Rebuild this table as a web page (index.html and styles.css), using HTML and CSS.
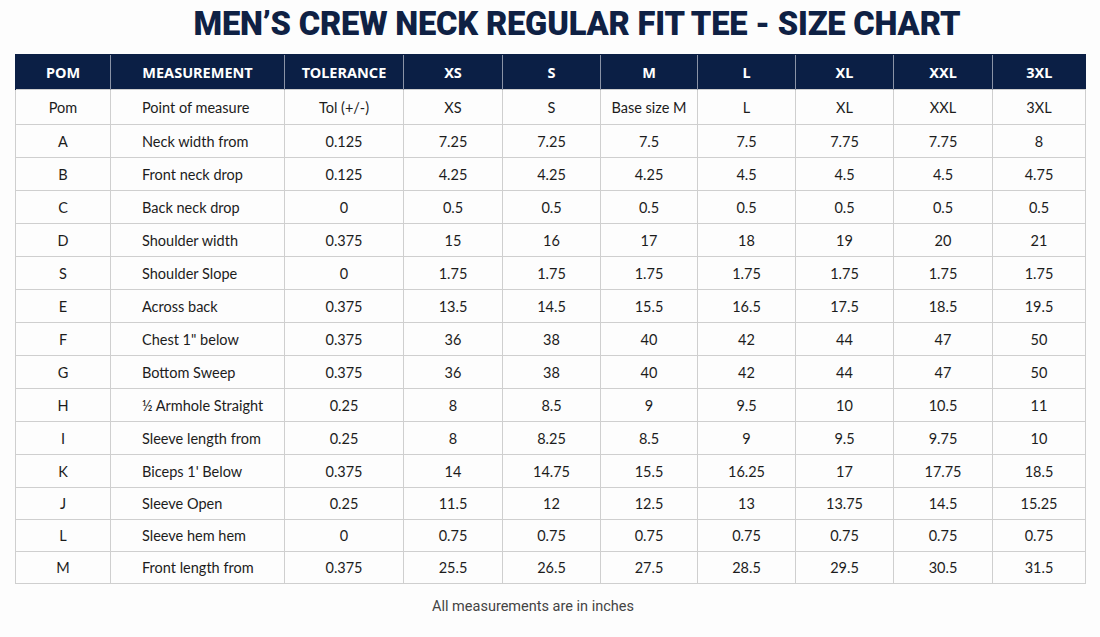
FILE: index.html
```html
<!DOCTYPE html>
<html lang="en">
<head>
<meta charset="utf-8">
<title>Size Chart</title>
<link rel="stylesheet" href="styles.css">
</head>
<body>
<div class="page">
  <h1 class="title">MEN’S CREW NECK REGULAR FIT TEE - SIZE CHART</h1>
  <table class="chart">
    <colgroup>
      <col class="c-pom"><col class="c-meas"><col class="c-tol"><col class="c-xs"><col class="c-s"><col class="c-m"><col class="c-l"><col class="c-xl"><col class="c-xxl"><col class="c-3xl">
    </colgroup>
    <thead>
      <tr><th>POM</th><th>MEASUREMENT</th><th>TOLERANCE</th><th>XS</th><th>S</th><th>M</th><th>L</th><th>XL</th><th>XXL</th><th>3XL</th></tr>
    </thead>
    <tbody>
      <tr class="sub"><td>Pom</td><td class="m">Point of measure</td><td>Tol (+/-)</td><td>XS</td><td>S</td><td>Base size M</td><td>L</td><td>XL</td><td>XXL</td><td>3XL</td></tr>
      <tr><td>A</td><td class="m">Neck width from</td><td>0.125</td><td>7.25</td><td>7.25</td><td>7.5</td><td>7.5</td><td>7.75</td><td>7.75</td><td>8</td></tr>
      <tr><td>B</td><td class="m">Front neck drop</td><td>0.125</td><td>4.25</td><td>4.25</td><td>4.25</td><td>4.5</td><td>4.5</td><td>4.5</td><td>4.75</td></tr>
      <tr><td>C</td><td class="m">Back neck drop</td><td>0</td><td>0.5</td><td>0.5</td><td>0.5</td><td>0.5</td><td>0.5</td><td>0.5</td><td>0.5</td></tr>
      <tr><td>D</td><td class="m">Shoulder width</td><td>0.375</td><td>15</td><td>16</td><td>17</td><td>18</td><td>19</td><td>20</td><td>21</td></tr>
      <tr><td>S</td><td class="m">Shoulder Slope</td><td>0</td><td>1.75</td><td>1.75</td><td>1.75</td><td>1.75</td><td>1.75</td><td>1.75</td><td>1.75</td></tr>
      <tr><td>E</td><td class="m">Across back</td><td>0.375</td><td>13.5</td><td>14.5</td><td>15.5</td><td>16.5</td><td>17.5</td><td>18.5</td><td>19.5</td></tr>
      <tr><td>F</td><td class="m">Chest 1" below</td><td>0.375</td><td>36</td><td>38</td><td>40</td><td>42</td><td>44</td><td>47</td><td>50</td></tr>
      <tr><td>G</td><td class="m">Bottom Sweep</td><td>0.375</td><td>36</td><td>38</td><td>40</td><td>42</td><td>44</td><td>47</td><td>50</td></tr>
      <tr><td>H</td><td class="m">½ Armhole Straight</td><td>0.25</td><td>8</td><td>8.5</td><td>9</td><td>9.5</td><td>10</td><td>10.5</td><td>11</td></tr>
      <tr><td>I</td><td class="m">Sleeve length from</td><td>0.25</td><td>8</td><td>8.25</td><td>8.5</td><td>9</td><td>9.5</td><td>9.75</td><td>10</td></tr>
      <tr><td>K</td><td class="m">Biceps 1' Below</td><td>0.375</td><td>14</td><td>14.75</td><td>15.5</td><td>16.25</td><td>17</td><td>17.75</td><td>18.5</td></tr>
      <tr class="s32"><td>J</td><td class="m">Sleeve Open</td><td>0.25</td><td>11.5</td><td>12</td><td>12.5</td><td>13</td><td>13.75</td><td>14.5</td><td>15.25</td></tr>
      <tr class="s32"><td>L</td><td class="m">Sleeve hem hem</td><td>0</td><td>0.75</td><td>0.75</td><td>0.75</td><td>0.75</td><td>0.75</td><td>0.75</td><td>0.75</td></tr>
      <tr class="s32"><td>M</td><td class="m">Front length from</td><td>0.375</td><td>25.5</td><td>26.5</td><td>27.5</td><td>28.5</td><td>29.5</td><td>30.5</td><td>31.5</td></tr>
    </tbody>
  </table>
  <p class="note">All measurements are in inches</p>
</div>
</body>
</html>
```

FILE: styles.css
```css
html, body {
  margin: 0;
  padding: 0;
  background: #fdfdfd;
}
.page {
  width: 1100px;
  padding: 4px 15px 0;
  box-sizing: border-box;
}
.title {
  margin: 0;
  height: 50px;
  line-height: 38px;
  text-align: center;
  font-family: "Roboto", "Liberation Sans", sans-serif;
  font-weight: 900;
  font-size: 34px;
  letter-spacing: -0.2px;
  color: #0f2144;
  transform: translateX(27px) scaleX(0.96);
}
.chart {
  width: 1070px;
  border-collapse: collapse;
  table-layout: fixed;
  font-family: "Lato", "Noto Sans", sans-serif;
  font-size: 14.5px;
  color: #1c1c1c;
}
.c-pom { width: 95px; }
.c-meas { width: 174px; }
.c-tol { width: 119px; }
.c-xs { width: 99px; }
.c-s { width: 98px; }
.c-m { width: 97px; }
.c-l { width: 98px; }
.c-xl { width: 98px; }
.c-xxl { width: 99px; }
.c-3xl { width: 93px; }
.chart th {
  background: #0b1f45;
  color: #fff;
  font-family: "Noto Sans", sans-serif;
  font-weight: 700;
  height: 34px;
  padding: 0;
  font-size: 14.5px;
  border-left: 1px solid #8a93a6;
  border-top: 1px solid #0b1f45;
}
.chart th:first-child { border-left: 1px solid #0b1f45; }
.chart td {
  height: 32px;
  padding: 0;
  text-align: center;
  border: 1px solid #cfcfcf;
}
.chart tr.sub td { height: 34px; }
.chart tr.s32 td { height: 31px; }
.chart td.m {
  text-align: left;
  padding-left: 31px;
}
.note {
  margin: 14px 0 0;
  padding-right: 34px;
  text-align: center;
  font-family: "Roboto", "Liberation Sans", sans-serif;
  font-size: 14.5px;
  color: #444;
}
```
